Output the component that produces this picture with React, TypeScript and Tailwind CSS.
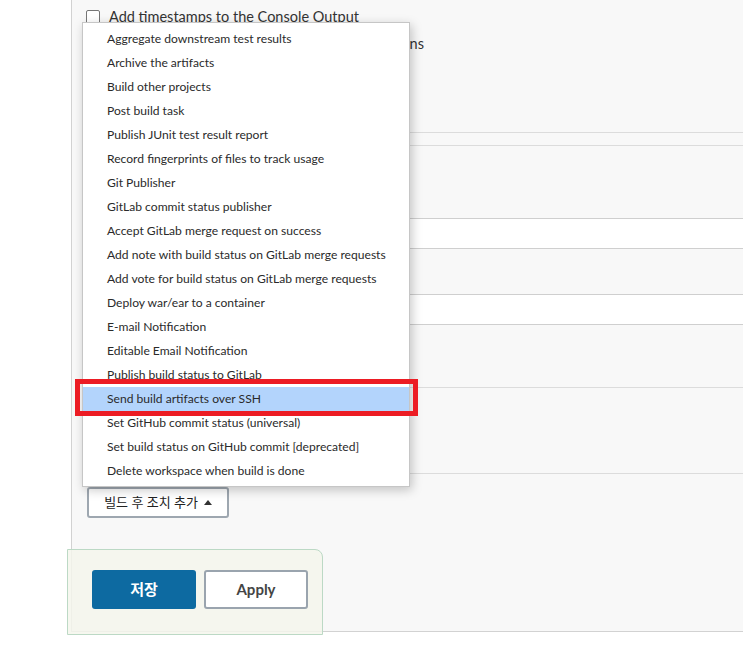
import React from "react";

const items = [
  "Aggregate downstream test results",
  "Archive the artifacts",
  "Build other projects",
  "Post build task",
  "Publish JUnit test result report",
  "Record fingerprints of files to track usage",
  "Git Publisher",
  "GitLab commit status publisher",
  "Accept GitLab merge request on success",
  "Add note with build status on GitLab merge requests",
  "Add vote for build status on GitLab merge requests",
  "Deploy war/ear to a container",
  "E-mail Notification",
  "Editable Email Notification",
  "Publish build status to GitLab",
  "Send build artifacts over SSH",
  "Set GitHub commit status (universal)",
  "Set build status on GitHub commit [deprecated]",
  "Delete workspace when build is done",
];

export default function App() {
  return (
    <div
      className="relative w-[743px] h-[659px] overflow-hidden bg-white text-[#333]"
      style={{ fontFamily: 'Lato, "Noto Sans CJK KR", sans-serif' }}
    >
      {/* main panel */}
      <div className="ml-[71px] h-[632px] border-l border-b border-[#d2d2d2] bg-[#f8f8f8]">
        <div className="pl-[14px] pt-[7px]">
          <label className="flex items-center h-[20px] gap-[9px] text-[14.5px] whitespace-nowrap">
            <span className="w-[14px] h-[14px] shrink-0 rounded-[2px] border border-[#767676] bg-white" />
            <span>Add timestamps to the Console Output</span>
          </label>
          <label className="flex items-center h-[20px] gap-[9px] text-[14.5px] tracking-[0.1px] mt-[7px] whitespace-nowrap">
            <span className="w-[14px] h-[14px] shrink-0 rounded-[2px] border border-[#767676] bg-white" />
            <span>Inspect build log for published Gradle build scans</span>
          </label>
        </div>
        <div className="ml-[15px]">
          <div className="h-[79px] border-b border-[#dcdcdc]" />
          <div className="h-[13px] border-b border-[#dcdcdc]" />
          <div className="h-[72px]" />
          <div className="h-[31px] border-y border-[#cfcfcf] bg-white" />
          <div className="h-[45px]" />
          <div className="h-[31px] border-y border-[#cfcfcf] bg-white" />
          <div className="h-[63px] border-b border-[#dcdcdc]" />
          <div className="h-[86px] border-b border-[#dcdcdc]" />
          <div className="pt-[13px]">
            <button className="h-[31px] w-[142px] flex items-center justify-center gap-[6px] rounded-[3px] border-2 border-[#9ea7b0] bg-white text-[13px] text-[#222]">
              <span>빌드 후 조치 추가</span>
              <svg width="8" height="5" viewBox="0 0 8 5">
                <path d="M0 5 L4 0 L8 5 Z" fill="#333" />
              </svg>
            </button>
          </div>
        </div>
      </div>

      {/* dropdown menu */}
      <div className="absolute left-[82px] top-[22px] w-[328px] h-[465px] border border-[#c6c6c6] bg-white pt-[4px] shadow-[2px_3px_10px_rgba(0,0,0,0.22)]">
        {items.map((t, i) => (
          <div
            key={t}
            className={
              i === 15
                ? "h-[24px] pl-[24px] flex items-center whitespace-nowrap text-[12.1px] text-[#2a2a2a] bg-[#b3d4fc]"
                : "h-[24px] pl-[24px] flex items-center whitespace-nowrap text-[12.1px] text-[#2a2a2a]"
            }
          >
            {t}
          </div>
        ))}
      </div>

      {/* red highlight box */}
      <div className="absolute left-[75px] top-[379px] w-[343px] h-[37px] border-[5px] border-[#ec1c24]" />

      {/* save bar */}
      <div className="absolute left-[67px] top-[549px] w-[256px] h-[86px] border border-[#bcd9c5] rounded-tr-[8px] bg-[#f4f6ec]/85 pl-[24px] pt-[20px] flex gap-[8px]">
        <button className="w-[104px] h-[39px] rounded-[3px] bg-[#0d6aa1] text-white font-bold text-[15px]">
          저장
        </button>
        <button className="w-[104px] h-[39px] rounded-[3px] border-2 border-[#9aa4ae] bg-white text-[#444] font-bold text-[15px]">
          Apply
        </button>
      </div>
    </div>
  );
}
